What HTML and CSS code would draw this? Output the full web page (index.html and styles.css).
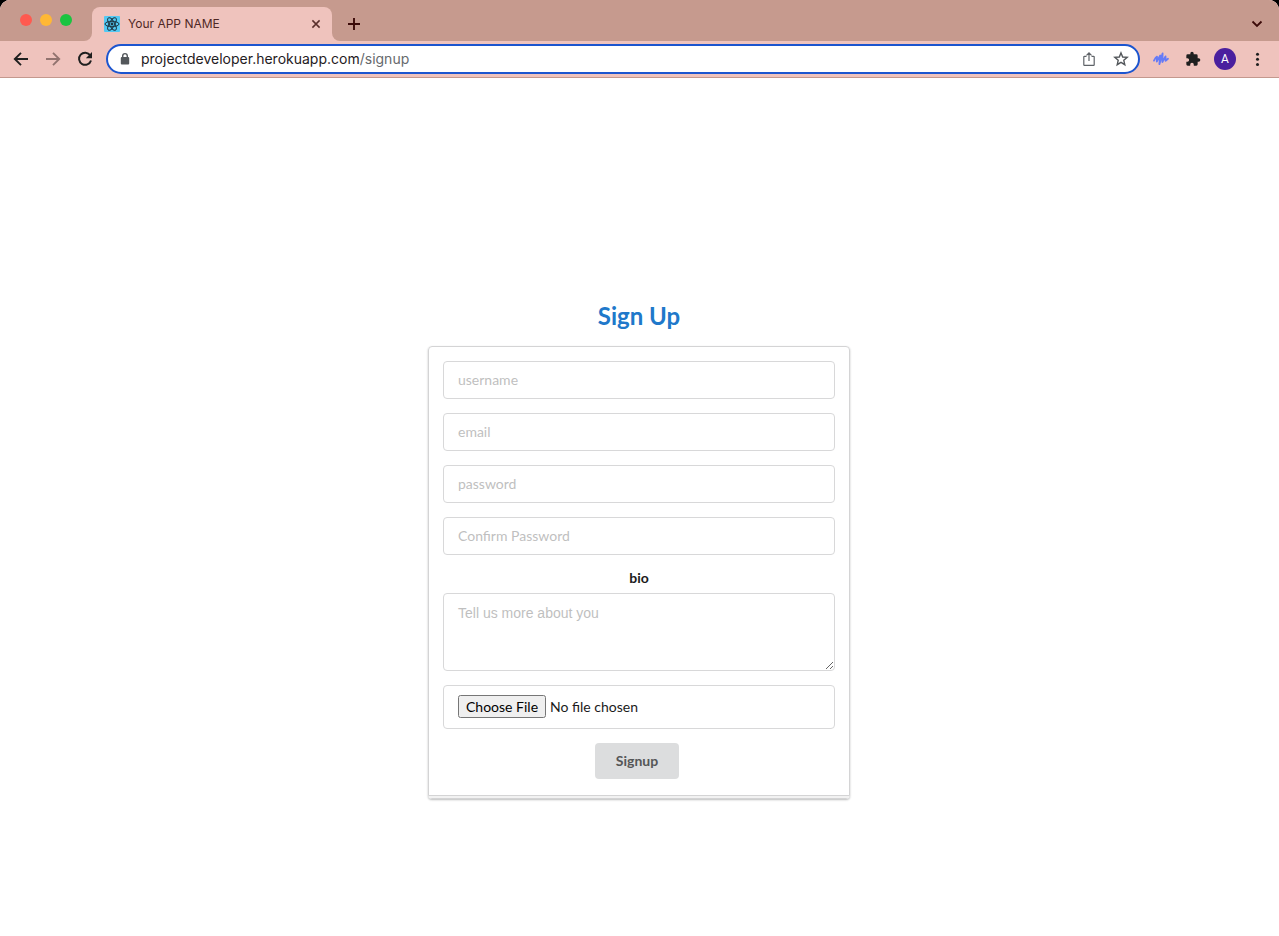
FILE: index.html
```html
<!DOCTYPE html>
<html lang="en">
<head>
<meta charset="utf-8">
<title>Your APP NAME</title>
<link rel="stylesheet" href="styles.css">
</head>
<body>
<div class="window">
  <header class="chrome">
    <div class="tab-strip">
      <div class="lights">
        <button class="light close" aria-label="Close window"></button>
        <button class="light minimize" aria-label="Minimize window"></button>
        <button class="light maximize" aria-label="Maximize window"></button>
      </div>
      <div class="tab">
        <svg class="favicon" viewBox="0 0 16 16" aria-hidden="true">
          <rect width="16" height="16" rx="1" fill="#53c8f2"/>
          <g fill="none" stroke="#1d3440" stroke-width="1">
            <ellipse cx="8" cy="8" rx="7" ry="2.7"/>
            <ellipse cx="8" cy="8" rx="7" ry="2.7" transform="rotate(60 8 8)"/>
            <ellipse cx="8" cy="8" rx="7" ry="2.7" transform="rotate(120 8 8)"/>
          </g>
          <circle cx="8" cy="8" r="1.4" fill="#1d3440"/>
        </svg>
        <span class="tab-title">Your APP NAME</span>
        <button class="icon-button" aria-label="Close tab">
          <svg class="icon" viewBox="0 0 16 16"><path d="M4.4 4.4l7.2 7.2M11.6 4.4l-7.2 7.2" fill="none" stroke="#5a2f2c" stroke-width="1.5"/></svg>
        </button>
      </div>
      <button class="icon-button new-tab" aria-label="New tab">
        <svg class="icon" viewBox="0 0 16 16"><path d="M8 2v12M2 8h12" fill="none" stroke="#3b0a08" stroke-width="1.9"/></svg>
      </button>
      <button class="icon-button tab-search" aria-label="Search tabs">
        <svg class="icon" viewBox="0 0 16 16"><path d="M3.5 5.5L8 10l4.500-4.500" fill="none" stroke="#3b0a08" stroke-width="1.800"/></svg>
      </button>
    </div>
    <div class="toolbar">
      <button class="icon-button" aria-label="Back">
        <svg class="icon" viewBox="0 0 16 16"><path d="M15 8H2M8 1.800L1.800 8 8 14.200" fill="none" stroke="#1f1f1f" stroke-width="1.900"/></svg>
      </button>
      <button class="icon-button" aria-label="Forward">
        <svg class="icon" viewBox="0 0 16 16"><path d="M1 8h13M8 1.800L14.200 8 8 14.200" fill="none" stroke="#92736f" stroke-width="1.900"/></svg>
      </button>
      <button class="icon-button" aria-label="Reload">
        <svg class="icon" viewBox="0 0 16 16"><path d="M13.200 4.300A6.100 6.100 0 1 0 14 9.500" fill="none" stroke="#1f1f1f" stroke-width="2"/><path d="M15 1v6.200H8.800z" fill="#1f1f1f"/></svg>
      </button>
      <div class="address">
        <svg class="icon" viewBox="0 0 16 16" aria-hidden="true"><rect x="3.800" y="6" width="8.400" height="7.600" rx="1" fill="#53575b"/><path d="M5.700 7V4.900a2.300 2.300 0 0 1 4.600 0V7" fill="none" stroke="#53575b" stroke-width="1.400"/></svg>
        <a class="url" href="#signup">projectdeveloper.herokuapp.com<span class="path">/signup</span></a>
        <button class="icon-button" aria-label="Share">
          <svg class="icon" viewBox="0 0 16 16"><path d="M5.500 5.300H3.500a.7.700 0 0 0-.7.700v7.700a.7.700 0 0 0 .7.700h9a.7.700 0 0 0 .7-.7V6a.7.700 0 0 0-.7-.7h-2M8 10V2.200M5.500 4.400L8 1.900l2.500 2.500" fill="none" stroke="#5f6368" stroke-width="1.200"/></svg>
        </button>
        <button class="icon-button" aria-label="Bookmark this page">
          <svg class="icon" viewBox="0 0 16 16"><path d="M8 1.900l1.700 4.100 4.500.4-3.400 2.900 1 4.400L8 11.400l-3.800 2.300 1-4.400-3.400-2.900 4.500-.4z" fill="none" stroke="#53575b" stroke-width="1.400"/></svg>
        </button>
      </div>
      <button class="icon-button" aria-label="Voice extension">
        <svg class="icon" viewBox="0 0 16 16"><path d="M1 9.600Q2.600 6.200 4 5.600L3.800 10.500 7.200 4.500 6.400 13.200 9.600 2.300 9.400 11 12.500 5.400 12.600 9.800 15 7.800" fill="none" stroke="#667bf7" stroke-width="1.800" stroke-linecap="round" stroke-linejoin="round"/></svg>
      </button>
      <button class="icon-button" aria-label="Extensions">
        <svg class="icon" viewBox="0 0 24 24"><path d="M20.500 11H19V7a2 2 0 0 0-2-2h-4V3.500a2.500 2.500 0 0 0-5 0V5H4a2 2 0 0 0-2 2v3.800h1.500a2.700 2.700 0 0 1 0 5.400H2V20a2 2 0 0 0 2 2h3.800v-1.500a2.700 2.700 0 0 1 5.400 0V22H17a2 2 0 0 0 2-2v-4h1.500a2.500 2.500 0 0 0 0-5z" fill="#1f1f1f"/></svg>
      </button>
      <button class="avatar" aria-label="Profile A">A</button>
      <button class="icon-button" aria-label="Browser menu">
        <svg class="icon" viewBox="0 0 16 16"><g fill="#1f1f1f"><circle cx="8.500" cy="3.200" r="1.500"/><circle cx="8.500" cy="8.300" r="1.500"/><circle cx="8.500" cy="13.400" r="1.500"/></g></svg>
      </button>
    </div>
  </header>
  <main class="page">
    <div class="column">
      <h2 class="title">Sign Up</h2>
      <form class="segment">
        <input class="field" type="text" placeholder="username" aria-label="username">
        <input class="field" type="email" placeholder="email" aria-label="email">
        <input class="field" type="password" placeholder="password" aria-label="password">
        <input class="field" type="password" placeholder="Confirm Password" aria-label="Confirm Password">
        <div class="bio">
          <label class="label" for="bio">bio</label>
          <textarea class="field area" id="bio" placeholder="Tell us more about you"></textarea>
        </div>
        <input class="field file" type="file" aria-label="Photo">
        <button class="submit" type="button">Signup</button>
      </form>
    </div>
  </main>
</div>
</body>
</html>
```
FILE: styles.css
```css
* { box-sizing: border-box; }

body {
  margin: 0;
  background: #000;
  font-family: Lato, "Liberation Sans", sans-serif;
  font-size: 14px;
}

button {
  margin: 0;
  padding: 0;
  border: 0;
  background: none;
}

.window {
  display: flex;
  flex-direction: column;
  min-height: 100vh;
  overflow: hidden;
  border-radius: 10px 10px 0 0;
  background: #fff;
}

.chrome { border-bottom: 1px solid #c4988e; }

.tab-strip {
  display: flex;
  align-items: flex-end;
  height: 41px;
  padding-right: 14px;
  background: #efc3bd;
}

.lights {
  display: flex;
  align-self: stretch;
  align-items: center;
  gap: 8px;
  width: 92px;
  padding: 0 0 2px 20px;
  border-bottom-right-radius: 8px;
  background: #c69a8e;
}

.light {
  width: 12px;
  height: 12px;
  border-radius: 50%;
}

.close { background: #ff5a50; }
.minimize { background: #ffb835; }
.maximize { background: #1ac440; }

.tab {
  display: flex;
  align-items: center;
  gap: 8px;
  width: 240px;
  height: 34px;
  padding: 0 8px 0 12px;
  border-radius: 8px 8px 0 0;
  background: #efc3bd;
  box-shadow: 0 -8px 0 8px #c69a8e;
  clip-path: inset(-7px 0 0 0);
}

.favicon { width: 16px; height: 16px; }

.tab-title {
  flex: 1;
  padding-bottom: 2px;
  color: #4f2825;
  font: 12px Inter, sans-serif;
}

.icon-button {
  display: flex;
  flex: none;
}

.icon { display: block; width: 16px; height: 16px; flex: none; }

.new-tab {
  flex: 1;
  align-items: center;
  height: 41px;
  padding: 6px 0 0 14px;
  border-bottom-left-radius: 8px;
  background: #c69a8e;
}

.tab-search {
  align-items: center;
  height: 41px;
  padding-top: 6px;
  background: #c69a8e;
  box-shadow: 14px 0 0 #c69a8e;
}

.toolbar {
  display: flex;
  align-items: center;
  gap: 16px;
  height: 36px;
  padding: 0 14px 0 13px;
  background: #efc3bd;
}

.address {
  display: flex;
  flex: 1;
  align-items: center;
  gap: 16px;
  height: 30px;
  margin-left: -3px;
  margin-right: -3px;
  padding: 0 9px;
  border: 2px solid #1c55cf;
  border-radius: 15px;
  background: #fff;
}

.url {
  flex: 1;
  margin-left: -8px;
  padding-bottom: 2px;
  color: #1f2023;
  font: 14px Inter, sans-serif;
  text-decoration: none;
}

.path { color: #66696d; }

.avatar {
  width: 22px;
  height: 22px;
  margin: 0 -3px;
  border-radius: 50%;
  background: #4a1f9e;
  color: #fff;
  font: 12px Roboto, sans-serif;
}

.page {
  display: flex;
  flex: 1;
  justify-content: center;
  align-items: center;
  padding: 85px 15px 0 14px;
}

.column { width: 100%; max-width: 422px; }

.title {
  margin: 0 0 15px;
  color: #2078ca;
  font-size: 24px;
  line-height: 30px;
  text-align: center;
}

.segment {
  position: relative;
  display: flex;
  flex-direction: column;
  gap: 14px;
  padding: 14px 14px 19px;
  border: 1px solid #d4d4d5;
  border-radius: 4px;
  box-shadow: 0 1px 2px rgba(34, 36, 38, 0.3);
}

.segment::after {
  content: "";
  position: absolute;
  right: 0;
  bottom: 0;
  left: 0;
  height: 2px;
  border-top: 1px solid #d4d4d5;
  background: #f2f2f2;
}

.field {
  display: block;
  width: 100%;
  height: 38px;
  padding: 9px 14px;
  border: 1px solid #d8d8d9;
  border-radius: 4px;
  outline: 0;
  background: #fff;
  color: #1b1b1b;
  font: 14px/18px Lato, "Liberation Sans", sans-serif;
}

.field::placeholder { color: #bfbfbf; }

.label {
  display: block;
  margin-bottom: 6px;
  color: #1b1b1b;
  font-size: 14px;
  font-weight: 700;
  line-height: 18px;
  text-align: center;
}

.area {
  height: 78px;
  padding: 10px 14px;
  font-family: "Liberation Sans", Arial, sans-serif;
}

.file { height: 44px; }

.file::file-selector-button {
  height: 23px;
  padding: 1px 6px;
  font: 14px Lato, "Liberation Sans", sans-serif;
}

.submit {
  align-self: center;
  min-width: 84px;
  height: 36px;
  margin-right: 4px;
  padding: 0 20px;
  border-radius: 4px;
  background: #dcddde;
  color: #555657;
  font: 700 14px Lato, sans-serif;
}
```
